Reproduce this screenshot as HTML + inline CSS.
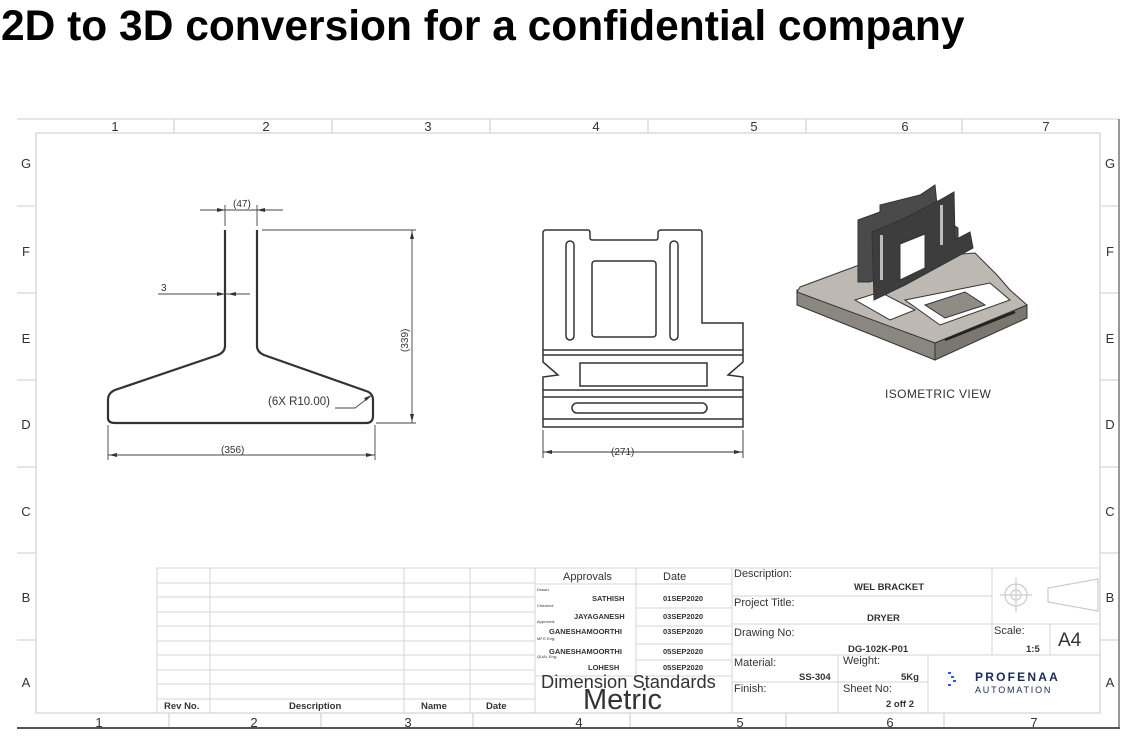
<!DOCTYPE html>
<html><head><meta charset="utf-8"><style>
html,body{margin:0;padding:0;background:#fff;width:1130px;height:740px;overflow:hidden}
h1{position:absolute;left:1px;top:3px;margin:0;font:bold 42.5px "Liberation Sans",sans-serif;color:#000;letter-spacing:0}
svg{position:absolute;left:0;top:0}
</style></head><body>
<h1>2D to 3D conversion for a confidential company</h1>
<svg width="1130" height="740" viewBox="0 0 1130 740" font-family="Liberation Sans, sans-serif">
<g stroke="#d6d6d6" stroke-width="1.3" fill="none">
<line x1="17" y1="119" x2="1119" y2="119"/>
<rect x="36" y="133" width="1064" height="580"/>
<line x1="174" y1="119" x2="174" y2="133"/><line x1="332" y1="119" x2="332" y2="133"/><line x1="490" y1="119" x2="490" y2="133"/><line x1="648" y1="119" x2="648" y2="133"/><line x1="806" y1="119" x2="806" y2="133"/><line x1="962" y1="119" x2="962" y2="133"/>
<line x1="169" y1="713" x2="169" y2="728"/><line x1="321" y1="713" x2="321" y2="728"/><line x1="473" y1="713" x2="473" y2="728"/><line x1="630" y1="713" x2="630" y2="728"/><line x1="786" y1="713" x2="786" y2="728"/><line x1="944" y1="713" x2="944" y2="728"/>
<g>
<line x1="17" y1="206" x2="36" y2="206"/><line x1="17" y1="293" x2="36" y2="293"/><line x1="17" y1="380" x2="36" y2="380"/><line x1="17" y1="467" x2="36" y2="467"/><line x1="17" y1="553" x2="36" y2="553"/><line x1="17" y1="640" x2="36" y2="640"/>
<line x1="1100" y1="206" x2="1119" y2="206"/><line x1="1100" y1="293" x2="1119" y2="293"/><line x1="1100" y1="380" x2="1119" y2="380"/><line x1="1100" y1="467" x2="1119" y2="467"/><line x1="1100" y1="553" x2="1119" y2="553"/><line x1="1100" y1="640" x2="1119" y2="640"/>
</g>
</g>
<line x1="1119" y1="119" x2="1119" y2="729" stroke="#777" stroke-width="1.5"/>
<line x1="17" y1="728" x2="1120" y2="728" stroke="#555" stroke-width="2"/>
<g font-size="13" fill="#333" text-anchor="middle">
<text x="115" y="131">1</text><text x="266" y="131">2</text><text x="428" y="131">3</text><text x="596" y="131">4</text><text x="754" y="131">5</text><text x="905" y="131">6</text><text x="1046" y="131">7</text>
<text x="99" y="727">1</text><text x="254" y="727">2</text><text x="408" y="727">3</text><text x="579" y="727">4</text><text x="740" y="727">5</text><text x="890" y="727">6</text><text x="1034" y="727">7</text>
<text x="26" y="168">G</text><text x="26" y="256">F</text><text x="26" y="343">E</text><text x="26" y="429">D</text><text x="26" y="516">C</text><text x="26" y="602">B</text><text x="26" y="687">A</text>
<text x="1110" y="168">G</text><text x="1110" y="256">F</text><text x="1110" y="343">E</text><text x="1110" y="429">D</text><text x="1110" y="516">C</text><text x="1110" y="602">B</text><text x="1110" y="687">A</text>
</g>
<g fill="none" stroke="#333">
<path d="M225 230 V346 Q225 352 218 355 L115 390 Q108 393 108 400 V418 Q108 423 115 423 H366 Q373 423 373 416 V400 Q373 393 366 391 L264 355 Q257 352 257 346 V230" stroke-width="2.2"/>
<g stroke-width="0.9" stroke="#444">
<line x1="225" y1="226" x2="225" y2="205"/><line x1="257" y1="226" x2="257" y2="205"/>
<line x1="200" y1="210" x2="283" y2="210"/>
<line x1="262" y1="230" x2="416" y2="230"/><line x1="376" y1="423" x2="416" y2="423"/>
<line x1="412" y1="230" x2="412" y2="423"/>
<line x1="158" y1="294" x2="250" y2="294"/>
<line x1="108" y1="425" x2="108" y2="460"/><line x1="375" y1="425" x2="375" y2="460"/>
<line x1="108" y1="455" x2="375" y2="455"/>
<path d="M335 408 L355 408 L372 395"/>
</g>
</g>
<g fill="#333">
<path d="M225 210 l-8 -2 v4z M257 210 l8 -2 v4z M412 231 l-2 8 h4z M412 422 l-2 -8 h4z M225 294 l-8 -2 v4z M228 294 l8 -2 v4z M109 455 l8 -2 v4z M374 455 l-8 -2 v4z M372 395 l-8 3 l2 3z"/>
</g>
<g font-size="10" fill="#333">
<text x="233" y="207">(47)</text>
<text x="161" y="291">3</text>
<text x="221" y="453">(356)</text>
<text x="268" y="405" font-size="11.5">(6X R10.00)</text>
<text x="0" y="0" transform="translate(408 352) rotate(-90)">(339)</text>
</g>
<g fill="none" stroke="#333" stroke-width="1.5">
<path d="M543 233 Q543 230 546 230 H588 Q590 230 590 233 V238 Q590 240 593 240 H656 Q658 240 658 237 V233 Q658 230 661 230 H700 Q702 230 702 233 V323 H743 V350 H543 Z"/>
<path d="M543 350 V362 L558 375 L543 377 V427 H743 V377 L728 375 L743 362 V350"/>
<line x1="543" y1="355" x2="743" y2="355"/>
<line x1="543" y1="390" x2="743" y2="390"/><line x1="543" y1="397" x2="743" y2="397"/>
<line x1="543" y1="419" x2="743" y2="419"/>
<rect x="580" y="363" width="127" height="23"/>
<rect x="572" y="403" width="135" height="10" rx="5"/>
<rect x="566" y="241" width="8" height="99" rx="4"/>
<rect x="670" y="241" width="8" height="99" rx="4"/>
<rect x="592" y="261" width="64" height="76" rx="3"/>
<line x1="543" y1="430" x2="543" y2="458" stroke-width="0.9"/><line x1="743" y1="430" x2="743" y2="458" stroke-width="0.9"/>
<line x1="543" y1="452" x2="743" y2="452" stroke-width="0.9"/>
</g>
<path fill="#333" d="M544 452 l8 -2 v4z M742 452 l-8 -2 v4z"/>
<text x="611" y="455" font-size="10" fill="#333">(271)</text>
<g stroke="#333" stroke-width="1">
<path d="M797 290 L935 343 L935 360 L797 305 Z" fill="#8a8680"/>
<path d="M935 343 L1027 305 L1027 318 L935 360 Z" fill="#7a7670"/>
<path d="M800 287 L870 261 L975 253 L997 275 L1010 290 L1027 305 L935 343 L797 292 Z" fill="#bdb9b2"/>
<path d="M855 300 L880 292 L915 310 L890 320 Z" fill="#fff"/>
<path d="M905 300 L990 283 L1010 300 L940 325 Z" fill="#fff"/>
<path d="M925 305 L965 292 L985 305 L945 318 Z" fill="#8f8b85"/>
<path d="M858 220 L880 212 L880 205 L920 195 L935 185 L938 215 L958 228 L958 242 L935 256 L870 282 L858 282 Z" fill="#4a4a4a"/>
<path d="M872 232 L905 218 L940 200 L954 192 L955 240 L970 232 L973 248 L905 285 L874 300 Z" fill="#3d3d3d"/>
<path d="M900 244 L925 234 L925 268 L900 280 Z" fill="#fff"/>
<rect x="880" y="235" width="3" height="45" fill="#bbb" stroke="none"/>
<rect x="940" y="205" width="3" height="40" fill="#bbb" stroke="none"/>
<path d="M945 340 L1015 312" stroke="#222" stroke-width="2.5"/>
</g>
<text x="885" y="398" font-size="12" fill="#333" letter-spacing="0.4">ISOMETRIC VIEW</text>
<g stroke="#d6d6d6" stroke-width="1" fill="none">
<rect x="157" y="568" width="378" height="145"/>
<line x1="210" y1="568" x2="210" y2="713"/><line x1="404" y1="568" x2="404" y2="713"/><line x1="470" y1="568" x2="470" y2="713"/>
<line x1="157" y1="583" x2="535" y2="583"/><line x1="157" y1="597" x2="535" y2="597"/><line x1="157" y1="612" x2="535" y2="612"/><line x1="157" y1="626" x2="535" y2="626"/><line x1="157" y1="641" x2="535" y2="641"/><line x1="157" y1="655" x2="535" y2="655"/><line x1="157" y1="670" x2="535" y2="670"/><line x1="157" y1="684" x2="535" y2="684"/><line x1="157" y1="699" x2="535" y2="699"/>
<line x1="535" y1="568" x2="1100" y2="568"/>
<line x1="636" y1="568" x2="636" y2="676"/>
<line x1="535" y1="584" x2="732" y2="584"/>
<line x1="636" y1="608" x2="732" y2="608"/><line x1="636" y1="626" x2="732" y2="626"/><line x1="636" y1="644" x2="732" y2="644"/><line x1="636" y1="660" x2="732" y2="660"/>
<line x1="535" y1="676" x2="732" y2="676"/>
<line x1="732" y1="568" x2="732" y2="713"/>
<line x1="732" y1="596" x2="992" y2="596"/><line x1="732" y1="624" x2="1100" y2="624"/>
<line x1="732" y1="655" x2="1100" y2="655"/>
<line x1="838" y1="655" x2="838" y2="713"/>
<line x1="732" y1="682" x2="928" y2="682"/>
<line x1="928" y1="655" x2="928" y2="713"/>
<line x1="992" y1="568" x2="992" y2="655"/><line x1="1050" y1="624" x2="1050" y2="655"/>
</g>
<g font-size="9.5" fill="#333" font-weight="bold">
<text x="164" y="709">Rev No.</text><text x="289" y="709">Description</text><text x="421" y="709">Name</text><text x="486" y="709">Date</text>
</g>
<g fill="#333">
<text x="563" y="580" font-size="11">Approvals</text><text x="663" y="580" font-size="11">Date</text>
<g font-size="4"><text x="537" y="591">Drawn:</text><text x="537" y="607">Checked:</text><text x="537" y="623">Approved:</text><text x="537" y="640">MFG Eng:</text><text x="537" y="658">QUAL Eng:</text></g>
<g font-size="7.5" font-weight="bold"><text x="592" y="601">SATHISH</text><text x="574" y="619">JAYAGANESH</text><text x="549" y="634">GANESHAMOORTHI</text><text x="549" y="654">GANESHAMOORTHI</text><text x="588" y="670">LOHESH</text></g>
<g font-size="7.5" font-weight="bold"><text x="663" y="601">01SEP2020</text><text x="663" y="619">03SEP2020</text><text x="663" y="634">03SEP2020</text><text x="663" y="654">05SEP2020</text><text x="663" y="670">05SEP2020</text></g>
<text x="541" y="688" font-size="18.3">Dimension Standards</text>
<text x="583" y="709" font-size="29">Metric</text>
<g font-size="11"><text x="734" y="577">Description:</text><text x="734" y="606">Project Title:</text><text x="734" y="636">Drawing No:</text><text x="734" y="666">Material:</text><text x="843" y="664">Weight:</text><text x="734" y="692">Finish:</text><text x="843" y="692">Sheet No:</text><text x="994" y="634">Scale:</text></g>
<g font-size="9.5" font-weight="bold"><text x="854" y="590">WEL BRACKET</text><text x="867" y="621">DRYER</text><text x="848" y="652">DG-102K-P01</text><text x="799" y="680">SS-304</text><text x="901" y="680">5Kg</text><text x="886" y="707">2 off 2</text><text x="1026" y="652">1:5</text></g>
<text x="1058" y="646" font-size="19">A4</text>
</g>
<g stroke="#ccc" fill="none" stroke-width="1.2">
<circle cx="1016" cy="595" r="11"/><circle cx="1016" cy="595" r="5"/>
<line x1="1000" y1="595" x2="1032" y2="595"/><line x1="1016" y1="578" x2="1016" y2="612"/>
<path d="M1048 588 L1048 602 L1098 611 L1098 579 Z"/>
</g>
<g fill="#2a5bd7"><rect x="948" y="672" width="3" height="2"/><rect x="951" y="676" width="3" height="2"/><rect x="953" y="680" width="3" height="2"/><rect x="948" y="684" width="3" height="2"/></g>
<text x="975" y="681" font-size="12" font-weight="bold" fill="#1b2a55" letter-spacing="2.2">PROFENAA</text>
<text x="975" y="693" font-size="9" fill="#1b2a55" letter-spacing="1.8">AUTOMATION</text>
</svg>
</body></html>
